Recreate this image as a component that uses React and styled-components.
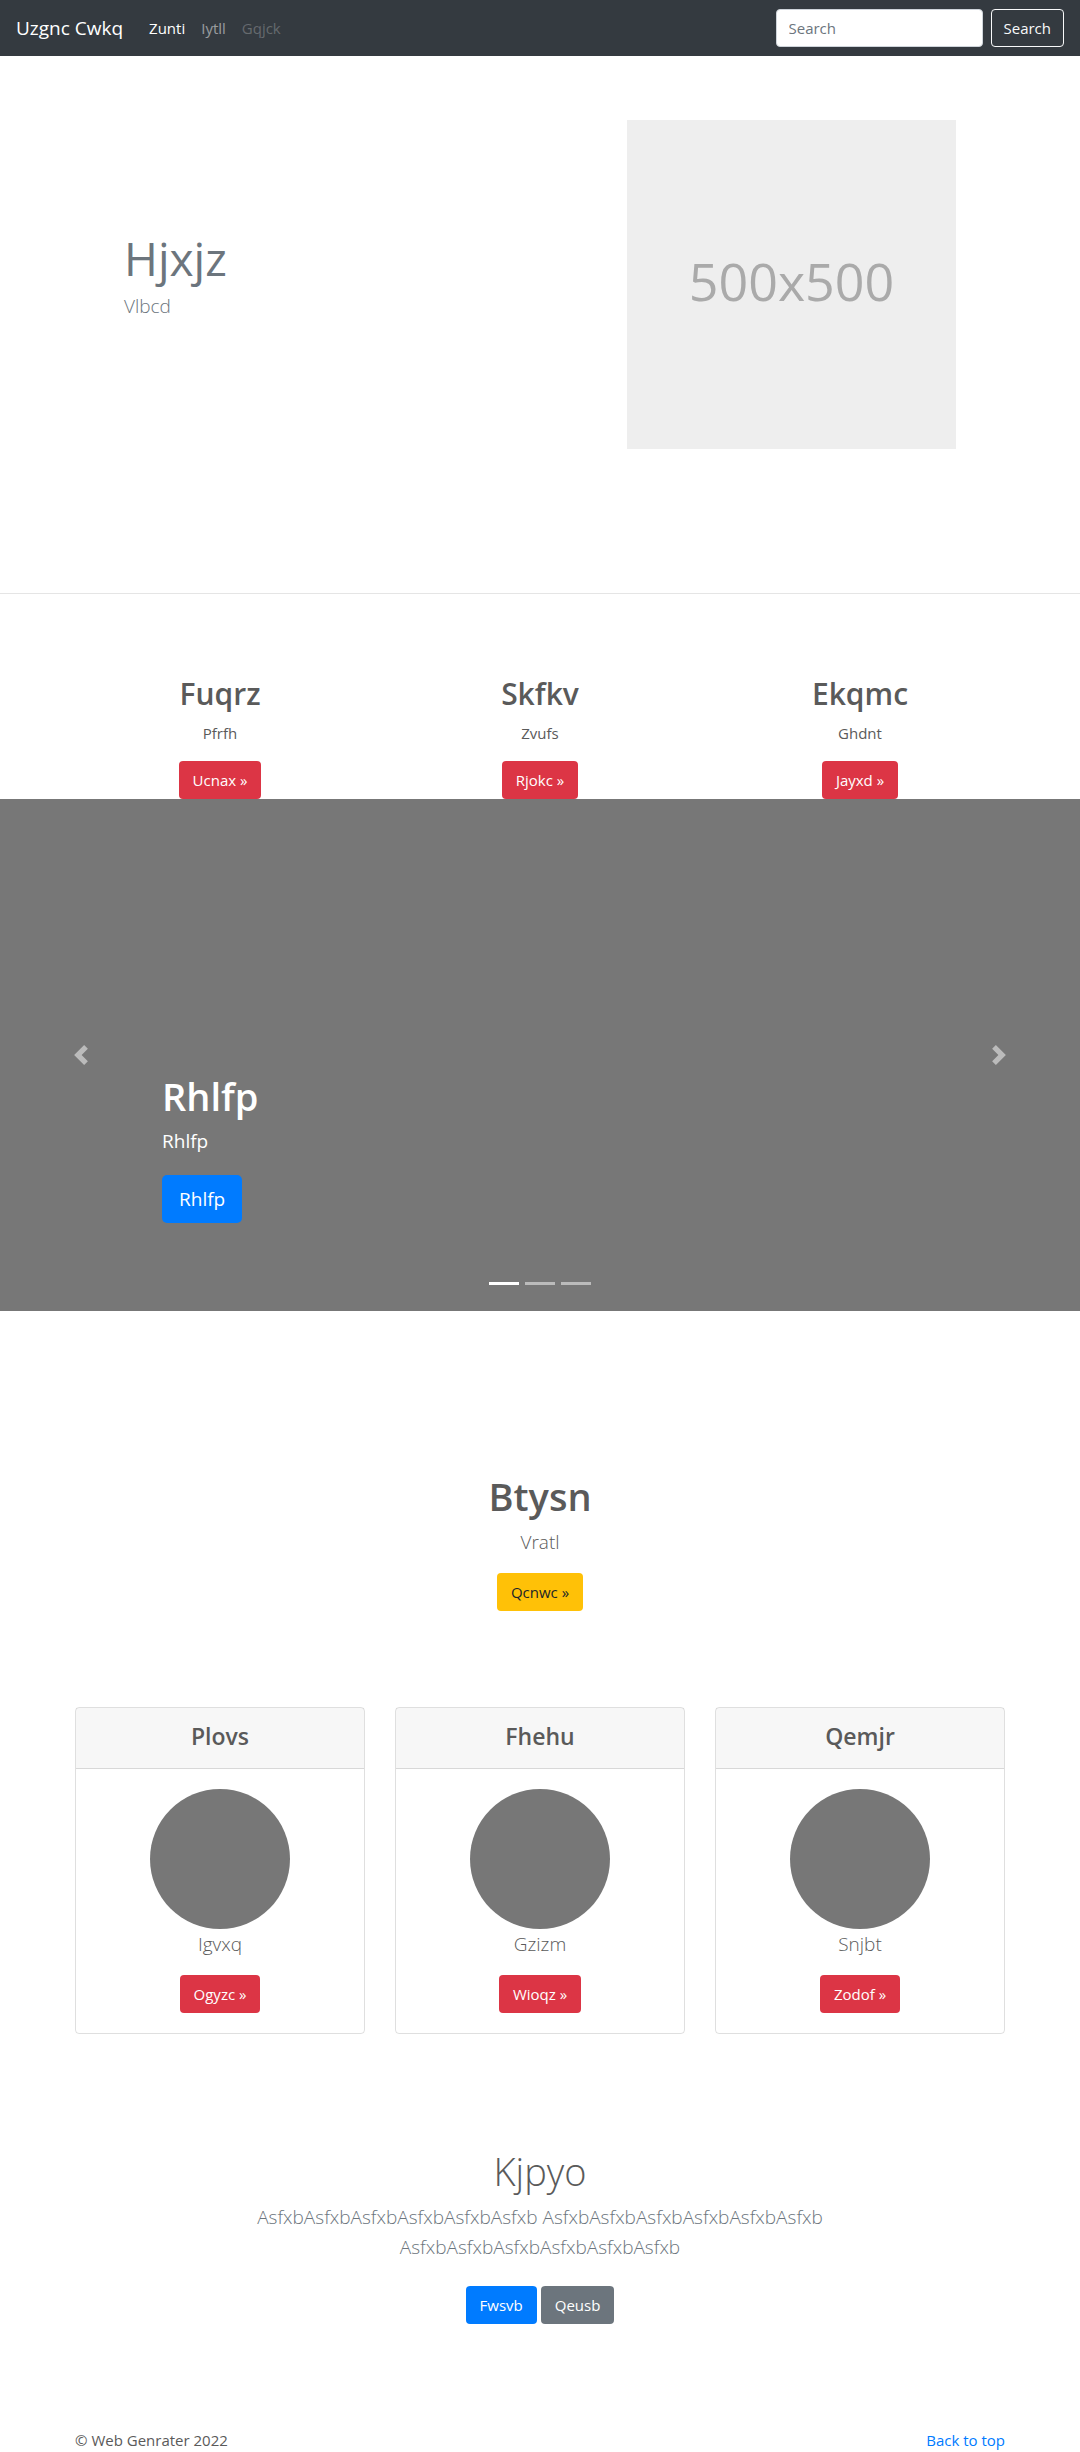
import React, { useState } from "react";
import styled, { createGlobalStyle, ThemeProvider } from "styled-components";

const theme = {
  font: '"Open Sans", "Noto Sans", sans-serif',
  text: "#5a5a5a",
  muted: "#6c757d",
  grey: "#777777",
  dark: "#343a40",
  blue: "#007bff",
  red: "#dc3545",
  yellow: "#ffc107",
};

const GlobalStyle = createGlobalStyle`
  *, *::before, *::after { box-sizing: border-box; }
  body {
    margin: 0;
    background: #fff;
    color: ${theme.text};
    font: 400 15px/24px ${theme.font};
  }
  h1, h2, h3, p { margin: 0; }
  a { text-decoration: none; }
`;

const Navbar = styled.nav`
  display: flex;
  align-items: center;
  min-height: 56px;
  padding: 8px 16px;
  background: ${(p) => p.theme.dark};
`;

const Brand = styled.a`
  margin-right: 18px;
  color: #fff;
  font-size: 19px;
  line-height: 30px;
`;

const NavLinks = styled.div`
  display: flex;
  flex: 1;
`;

const tones = {
  active: "#fff",
  normal: "rgba(255, 255, 255, 0.5)",
  disabled: "rgba(255, 255, 255, 0.25)",
};

const NavLink = styled.a`
  padding: 8px;
  color: ${(p) => tones[p.$tone]};
`;

const SearchForm = styled.form`
  display: flex;
  gap: 8px;
`;

const SearchInput = styled.input`
  width: 207px;
  height: 38px;
  padding: 6px 12px;
  border: 1px solid #ced4da;
  border-radius: 4px;
  background: #fff;
  color: #495057;
  font: inherit;
  &::placeholder {
    color: ${(p) => p.theme.muted};
    opacity: 1;
  }
`;

const SearchButton = styled.button`
  height: 38px;
  padding: 6px 12px;
  border: 1px solid #f8f9fa;
  border-radius: 4px;
  background: transparent;
  color: #f8f9fa;
  font: inherit;
`;

const Button = styled.a`
  display: inline-block;
  padding: ${(p) => (p.$large ? "9px 17px" : "7px 14px")};
  border-radius: ${(p) => (p.$large ? "5px" : "4px")};
  background: ${(p) => p.$color};
  color: ${(p) => p.$ink || "#fff"};
  font-size: ${(p) => (p.$large ? "19px" : "15px")};
  line-height: ${(p) => (p.$large ? "30px" : "24px")};
`;

const Heading = styled.h1`
  margin-bottom: 7px;
  padding-top: 1px;
  font-size: 38px;
  line-height: 48px;
  font-weight: ${(p) => (p.$light ? 300 : 600)};
`;

const Lead = styled.p`
  color: ${(p) => (p.$muted ? p.theme.muted : "inherit")};
  font-size: 19px;
  line-height: 30px;
  font-weight: 300;
`;

const Hero = styled.header`
  display: flex;
  align-items: center;
  justify-content: space-between;
  gap: 32px;
  max-width: 864px;
  margin: 0 auto;
  padding: 64px 16px 144px;
`;

const HeroText = styled.div`
  padding-bottom: 20px;
  color: ${(p) => p.theme.muted};
`;

const HeroTitle = styled.h1`
  margin-bottom: 4px;
  font-size: 46px;
  line-height: 58px;
  font-weight: 400;
`;

const Placeholder = styled.div`
  display: flex;
  flex: 0 1 329px;
  align-items: center;
  justify-content: center;
  aspect-ratio: 1;
  padding-bottom: 8px;
  background: #eeeeee;
  color: #aaaaaa;
  font-size: 52px;
  line-height: 64px;
`;

const Divider = styled.hr`
  margin: 0;
  border: 0;
  border-top: 1px solid rgba(0, 0, 0, 0.1);
`;

const Features = styled.section`
  display: grid;
  grid-template-columns: repeat(3, 1fr);
  max-width: 960px;
  margin: 80px auto 0;
  text-align: center;
`;

const FeatureTitle = styled.h2`
  margin-bottom: 7px;
  font-size: 30px;
  line-height: 40px;
  font-weight: 600;
`;

const FeatureText = styled.p`
  margin-bottom: 16px;
`;

const Carousel = styled.section`
  position: relative;
  display: flex;
  align-items: flex-end;
  min-height: 512px;
  padding: 0 15% 88px;
  background: ${(p) => p.theme.grey};
  color: #fff;
`;

const SlideText = styled.p`
  margin-bottom: 20px;
  font-size: 19px;
  line-height: 28px;
`;

const Control = styled.button`
  position: absolute;
  top: 0;
  bottom: 0;
  ${(p) => p.$side}: 0;
  display: flex;
  align-items: center;
  justify-content: center;
  width: 15%;
  padding: 0;
  border: 0;
  background: none;
  color: #fff;
  opacity: 0.5;
`;

const Indicators = styled.div`
  position: absolute;
  right: 15%;
  bottom: 16px;
  left: 15%;
  display: flex;
  justify-content: center;
  gap: 6px;
`;

const Indicator = styled.button`
  width: 30px;
  height: 23px;
  padding: 0;
  border: 0;
  border-top: 10px solid transparent;
  border-bottom: 10px solid transparent;
  background: #fff;
  background-clip: padding-box;
  opacity: ${(p) => (p.$active ? 1 : 0.5)};
`;

const Intro = styled.section`
  padding: 160px 16px 96px;
  text-align: center;
  ${Lead} {
    margin-bottom: 16px;
  }
`;

const Cards = styled.section`
  display: grid;
  grid-template-columns: repeat(3, 1fr);
  gap: 30px;
  max-width: 960px;
  margin: 0 auto;
  padding: 0 15px;
`;

const Card = styled.article`
  border: 1px solid rgba(0, 0, 0, 0.125);
  border-radius: 4px;
  text-align: center;
`;

const CardHeader = styled.div`
  padding: 13px 20px 17px;
  border-bottom: 1px solid rgba(0, 0, 0, 0.125);
  background: rgba(0, 0, 0, 0.03);
`;

const CardTitle = styled.h3`
  font-size: 23px;
  line-height: 30px;
  font-weight: 600;
`;

const CardBody = styled.div`
  padding: 20px;
  ${Lead} {
    margin-bottom: 16px;
  }
`;

const Avatar = styled.div`
  width: 140px;
  height: 140px;
  margin: 0 auto;
  border-radius: 50%;
  background: ${(p) => p.theme.grey};
`;

const CallToAction = styled.section`
  max-width: 640px;
  margin: 0 auto;
  padding: 112px 15px 104px;
  text-align: center;
`;

const Actions = styled.div`
  display: flex;
  justify-content: center;
  gap: 4px;
  margin-top: 24px;
`;

const Footer = styled.footer`
  display: flex;
  justify-content: space-between;
  max-width: 960px;
  margin: 0 auto;
  padding: 0 15px;
`;

const FooterLink = styled.a`
  color: ${(p) => p.theme.blue};
`;

const features = [
  { title: "Fuqrz", text: "Pfrfh", action: "Ucnax »" },
  { title: "Skfkv", text: "Zvufs", action: "Rjokc »" },
  { title: "Ekqmc", text: "Ghdnt", action: "Jayxd »" },
];

const cards = [
  { title: "Plovs", text: "Igvxq", action: "Ogyzc »" },
  { title: "Fhehu", text: "Gzizm", action: "Wioqz »" },
  { title: "Qemjr", text: "Snjbt", action: "Zodof »" },
];

const phrase = "Asfxb".repeat(6);

function Chevron({ next }) {
  return (
    <svg width="20" height="20" viewBox="0 0 8 8" fill="currentColor" aria-hidden="true">
      <path
        d={
          next
            ? "M2.75 0l-1.5 1.5 2.5 2.5-2.5 2.5 1.5 1.5 4-4-4-4z"
            : "M5.25 0l-4 4 4 4 1.5-1.5-2.5-2.5 2.5-2.5-1.5-1.5z"
        }
      />
    </svg>
  );
}

export default function App() {
  const [slide, setSlide] = useState(0);
  return (
    <ThemeProvider theme={theme}>
      <GlobalStyle />
      <Navbar>
        <Brand href="#">Uzgnc Cwkq</Brand>
        <NavLinks>
          <NavLink href="#" $tone="active">Zunti</NavLink>
          <NavLink href="#" $tone="normal">Iytll</NavLink>
          <NavLink href="#" $tone="disabled" aria-disabled="true">Gqjck</NavLink>
        </NavLinks>
        <SearchForm onSubmit={(e) => e.preventDefault()}>
          <SearchInput type="search" placeholder="Search" aria-label="Search" />
          <SearchButton type="submit">Search</SearchButton>
        </SearchForm>
      </Navbar>

      <Hero>
        <HeroText>
          <HeroTitle>Hjxjz</HeroTitle>
          <Lead $muted>Vlbcd</Lead>
        </HeroText>
        <Placeholder>500x500</Placeholder>
      </Hero>
      <Divider />

      <Features>
        {features.map((f) => (
          <div key={f.title}>
            <FeatureTitle>{f.title}</FeatureTitle>
            <FeatureText>{f.text}</FeatureText>
            <Button href="#" $color={theme.red}>{f.action}</Button>
          </div>
        ))}
      </Features>

      <Carousel>
        <div>
          <Heading>Rhlfp</Heading>
          <SlideText>Rhlfp</SlideText>
          <Button href="#" $large $color={theme.blue}>Rhlfp</Button>
        </div>
        <Control $side="left" aria-label="Previous" onClick={() => setSlide((slide + 2) % 3)}>
          <Chevron />
        </Control>
        <Control $side="right" aria-label="Next" onClick={() => setSlide((slide + 1) % 3)}>
          <Chevron next />
        </Control>
        <Indicators>
          {[0, 1, 2].map((i) => (
            <Indicator key={i} $active={i === slide} aria-label={`Slide ${i + 1}`} onClick={() => setSlide(i)} />
          ))}
        </Indicators>
      </Carousel>

      <Intro>
        <Heading>Btysn</Heading>
        <Lead>Vratl</Lead>
        <Button href="#" $color={theme.yellow} $ink="#212529">Qcnwc »</Button>
      </Intro>

      <Cards>
        {cards.map((c) => (
          <Card key={c.title}>
            <CardHeader>
              <CardTitle>{c.title}</CardTitle>
            </CardHeader>
            <CardBody>
              <Avatar />
              <Lead>{c.text}</Lead>
              <Button href="#" $color={theme.red}>{c.action}</Button>
            </CardBody>
          </Card>
        ))}
      </Cards>

      <CallToAction>
        <Heading $light>Kjpyo</Heading>
        <Lead $muted>
          {phrase} {phrase} {phrase}
        </Lead>
        <Actions>
          <Button href="#" $color={theme.blue}>Fwsvb</Button>
          <Button href="#" $color={theme.muted}>Qeusb</Button>
        </Actions>
      </CallToAction>

      <Footer>
        <p>© Web Genrater 2022</p>
        <FooterLink href="#">Back to top</FooterLink>
      </Footer>
    </ThemeProvider>
  );
}
